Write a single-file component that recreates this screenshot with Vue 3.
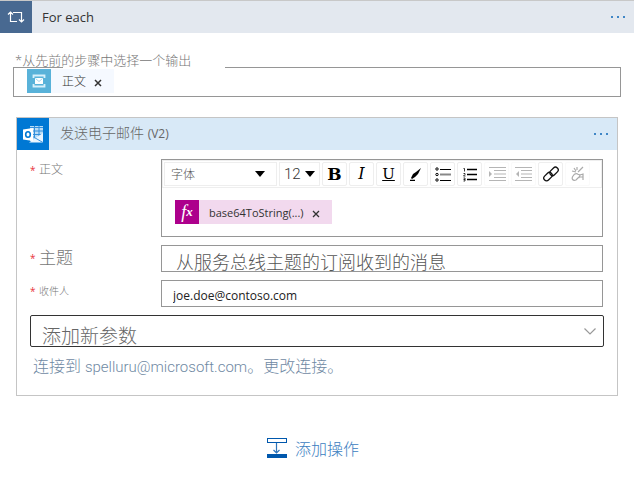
<script setup>
import { ref } from 'vue'

const subject = ref('从服务总线主题的订阅收到的消息')
const recipient = ref('joe.doe@contoso.com')
const dots = [0, 6, 12]
</script>

<template>
  <main class="loop">
    <header class="bar loop-bar">
      <span class="bar-icon loop-icon">
        <svg width="18" height="14" viewBox="0 0 18 14" fill="none" stroke="#fff" stroke-width="1.2">
          <path d="M10 11.500H3.500V2M1 4.500 3.500 2 6 4.500M6 2.500h8.500V12M12 9.500l2.500 2.500L17 9.500" />
        </svg>
      </span>
      <h1 class="loop-title">For each</h1>
      <button class="more" aria-label="更多">
        <svg width="14" height="2" viewBox="0 0 14 2" fill="#3f86c6">
          <rect v-for="d in dots" :key="d" :x="d" y="0" width="2" height="2" />
        </svg>
      </button>
    </header>

    <section class="source">
      <label class="source-label" for="source-box">*从先前的步骤中选择一个输出</label>
      <div id="source-box" class="source-box" tabindex="0">
        <span class="token token-bus">
          <span class="token-icon">
            <svg width="14" height="14" viewBox="0 0 14 14">
              <path d="M1.500 4V1.500h11V4M1.500 10v2.500h11V10" fill="none" stroke="#d8f0fb" stroke-width="1.800" />
              <rect x="3" y="4" width="8" height="6" fill="#fff" />
              <path d="M3.500 4.500 7 7.500l3.500-3" fill="none" stroke="#a9d9ee" />
            </svg>
          </span>
          <span class="token-text">正文</span>
          <button class="remove" aria-label="删除">
            <svg width="8" height="8" viewBox="0 0 8 8" stroke="#333" stroke-width="1.5"><path d="m1 1 6 6M7 1 1 7" /></svg>
          </button>
        </span>
      </div>
    </section>

    <section class="card">
      <header class="bar card-bar">
        <span class="bar-icon mail-icon">
          <svg width="22" height="20" viewBox="0 0 22 20">
            <path d="M8 2h13v15H8z" fill="#b9dcf6" />
            <path d="M8 3.500h13M8 7h13M8 10.500h13M12.500 2v12M17 2v12" stroke="#338fdc" stroke-width="1" />
            <path d="M7 18.500 21 9v9.500z" fill="#e9f5ff" />
            <path d="m8 11 13 7.500" stroke="#3b94de" />
            <path d="M1 5.500 11 4v13L1 15.500z" fill="#fff" />
            <ellipse cx="6" cy="10.500" rx="2.300" ry="2.700" fill="none" stroke="#0078d4" stroke-width="1.600" />
          </svg>
        </span>
        <h2 class="card-title">发送电子邮件 <small>(V2)</small></h2>
        <button class="more" aria-label="更多">
          <svg width="14" height="2" viewBox="0 0 14 2" fill="#3f86c6">
            <rect v-for="d in dots" :key="d" :x="d" y="0" width="2" height="2" />
          </svg>
        </button>
      </header>

      <form class="form" @submit.prevent>
        <div class="row">
          <label class="name" for="body"><i>*</i>正文</label>
          <div class="editor">
            <div class="tools">
              <span class="pick pick-font">
                <select aria-label="字体"><option>字体</option></select>
                <svg width="10" height="6" viewBox="0 0 10 6"><path d="M0 0h10L5 6z" /></svg>
              </span>
              <span class="pick pick-size">
                <select aria-label="字号"><option>12</option></select>
                <svg width="10" height="6" viewBox="0 0 10 6"><path d="M0 0h10L5 6z" /></svg>
              </span>
              <button class="tool bold" type="button">B</button>
              <button class="tool italic" type="button">I</button>
              <button class="tool underline" type="button">U</button>
              <button class="tool" type="button" aria-label="颜色">
                <svg width="14" height="14" viewBox="0 0 14 14">
                  <path d="m2 11 2-4 3-2 5-4-3 6-3 3-3 2z" />
                  <path d="M1 13.500h5" stroke="#000" stroke-width="1.500" />
                </svg>
              </button>
              <button class="tool" type="button" aria-label="项目符号">
                <svg width="16" height="15" viewBox="0 0 16 15" fill="none" stroke="#000">
                  <circle cx="2" cy="2" r="1.200" /><circle cx="2" cy="7.500" r="1.200" /><circle cx="2" cy="13" r="1.200" />
                  <path d="M5 2.500h11M5 13.500h11" />
                  <path d="M5 7.500h11" stroke="#888" stroke-width="2" />
                </svg>
              </button>
              <button class="tool" type="button" aria-label="编号">
                <svg width="14" height="15" viewBox="0 0 14 15" fill="none" stroke="#000">
                  <path d="M.5 1.500h1v3M.5 6.500h1.500v1L.5 9h2M.5 11h1.500v3H.5M.5 12.500H2" stroke-width=".8" />
                  <path d="M4 2.500h10M4 7.500h10M4 12.500h10" stroke-width="1.700" />
                </svg>
              </button>
              <button class="tool off" type="button" aria-label="增加缩进" disabled>
                <svg width="18" height="14" viewBox="0 0 18 14" fill="none" stroke="#b5b5b5">
                  <path d="M1 .5h17M1 13.500h17M6 3.500h12M6 10.500h12M6 7h12" stroke-width="1.200" />
                  <path d="m1 4 3 3-3 3z" fill="#b5b5b5" stroke="none" />
                </svg>
              </button>
              <button class="tool off" type="button" aria-label="减少缩进" disabled>
                <svg width="17" height="14" viewBox="0 0 17 14" fill="none" stroke="#b5b5b5">
                  <path d="M0 .5h17M0 13.500h17M6 3.500h11M6 10.500h11M6 7h11" stroke-width="1.200" />
                  <path d="M4 4 1 7l3 3z" fill="#b5b5b5" stroke="none" />
                </svg>
              </button>
              <button class="tool" type="button" aria-label="链接">
                <svg width="16" height="16" viewBox="0 0 16 16" fill="none" stroke="#111" stroke-width="1.300">
                  <rect x="6" y="2.500" width="9.500" height="5.500" rx="2.700" transform="rotate(-45 11 5)" />
                  <rect x=".5" y="8" width="9.500" height="5.500" rx="2.700" transform="rotate(-45 5 11)" />
                </svg>
              </button>
              <button class="tool off" type="button" aria-label="取消链接" disabled>
                <svg width="14" height="16" viewBox="0 0 14 16" fill="none" stroke="#aaa" stroke-width="1.200">
                  <path d="M12 1 7 6M3 2l2 3M1 5l4 1M6 1v3" />
                  <path d="M7 8c-2-1-4 0-5 2-2 3 0 5 3 4l3-3M6 8l3 1-1 3M9 9l3-1v6M12 11H9" />
                </svg>
              </button>
            </div>
            <div id="body" class="editor-body" tabindex="0">
              <span class="token token-fx">
                <span class="token-icon fx">f<sub>x</sub></span>
                <span class="token-text">base64ToString(...)</span>
                <button class="remove" type="button" aria-label="删除">
                  <svg width="8" height="8" viewBox="0 0 8 8" stroke="#333" stroke-width="1.300"><path d="m1 1 6 6M7 1 1 7" /></svg>
                </button>
              </span>
            </div>
          </div>
        </div>

        <div class="row">
          <label class="name name-large" for="subject"><i>*</i>主题</label>
          <input id="subject" v-model="subject" class="field field-large" type="text">
        </div>

        <div class="row">
          <label class="name name-small" for="to"><i>*</i>收件人</label>
          <input id="to" v-model="recipient" class="field" type="text">
        </div>

        <div class="params">
          <select aria-label="添加新参数"><option>添加新参数</option></select>
          <svg width="12" height="7" viewBox="0 0 12 7" fill="none" stroke="#999" stroke-width="1.200"><path d="m.5.5 5.500 5.500L11.500.5" /></svg>
        </div>

        <p class="connection">连接到 <span class="account">spelluru@microsoft.com</span>。<a href="#">更改连接。</a></p>
      </form>
    </section>

    <button class="add">
      <svg width="20" height="20" viewBox="0 0 20 20">
        <rect x=".5" y=".5" width="19" height="4" fill="#fff" stroke="#0058ad" />
        <path d="M9.500 5v10M6.500 12l3 3 3-3" fill="none" stroke="#2f75bb" stroke-width="1.200" />
        <rect y="16" width="20" height="4" fill="#0058ad" />
      </svg>
      添加操作
    </button>
  </main>
</template>

<style>
body {
  background: #fff;
}
</style>

<style scoped>
.loop {
  font-family: "Open Sans", "Noto Sans CJK SC", sans-serif;
  font-size: 12px;
  color: #333;
}
.loop * {
  box-sizing: border-box;
}
button,
input,
select {
  font: inherit;
  color: inherit;
  margin: 0;
  padding: 0;
  border: 0;
  background: none;
}
select {
  appearance: none;
}
svg {
  display: block;
  flex: none;
}
h1,
h2,
p {
  margin: 0;
  font-weight: 400;
}
.bar {
  display: flex;
  align-items: center;
  height: 32px;
}
.bar-icon {
  display: grid;
  place-items: center;
  width: 32px;
  height: 32px;
}
.loop-bar {
  height: 33px;
  border-top: 1px solid #c8c8c8;
  background: #e3e8ef;
}
.loop-icon {
  background: #486991;
}
.loop-title {
  margin-left: 10px;
  font-size: 13px;
}
.more {
  display: flex;
  margin-left: auto;
  padding: 8px 9px;
}
.source {
  padding: 18px 13px 0;
}
.source-label {
  display: block;
  position: relative;
  z-index: 1;
  height: 16px;
  padding-left: 2px;
  font-size: 13px;
  font-weight: 300;
  line-height: 18px;
  color: #777;
}
.source-box {
  position: relative;
  display: flex;
  height: 30px;
  padding: 1px 13px;
  border: 1px solid #969696;
}
.source-box::before {
  content: "";
  position: absolute;
  top: -1px;
  left: 49px;
  width: 162px;
  height: 1px;
  background: #fff;
}
.token {
  display: flex;
  align-items: center;
  height: 24px;
  padding-right: 12px;
}
.token-icon {
  display: grid;
  place-items: center;
  width: 24px;
  height: 24px;
  margin-right: 11px;
}
.token-bus {
  background: #f5f9ff;
  font-weight: 300;
}
.token-bus .token-icon {
  background: #59b2d9;
}
.remove {
  padding-top: 4px;
  margin-left: 8px;
}
.card {
  margin: 20px 16px 0;
  border: 1px solid #c5c5c5;
}
.card-bar {
  background: #d8e9f7;
}
.mail-icon {
  background: #0078d4;
}
.card-title {
  margin-left: 11px;
  font-size: 14px;
  font-weight: 300;
  line-height: 20px;
  padding-bottom: 2px;
  color: #666;
}
.card-title small {
  font-size: 12px;
  font-weight: 400;
}
.form {
  display: grid;
  gap: 8px;
  padding: 9px 13px 16px;
}
.row {
  display: grid;
  grid-template-columns: 131px 1fr;
  padding-right: 1px;
}
.name {
  display: flex;
  align-items: flex-start;
  font-weight: 300;
  line-height: 22px;
  color: #777;
}
.name i {
  width: 9px;
  font-size: 10px;
  font-style: normal;
  font-weight: 400;
  color: #e8323c;
}
.name-large {
  font-size: 17px;
  line-height: 26px;
}
.name-small {
  font-size: 10px;
}
.editor {
  height: 78px;
  border: 1px solid #969696;
}
.tools {
  display: flex;
  gap: 2px;
  height: 28px;
  padding: 1px;
  border: 1px solid #eee;
  overflow: hidden;
}
.tool {
  display: flex;
  align-items: center;
  justify-content: center;
  width: 25px;
  height: 24px;
  border: 1px solid #eee;
  border-radius: 2px;
  color: #000;
}
.off {
  border-color: #fafafa;
}
.bold {
  font: 700 17px/20px "DejaVu Serif", serif;
}
.italic {
  font: italic 16px/20px "DejaVu Serif", serif;
}
.underline {
  font: 15px/20px "DejaVu Serif", serif;
  text-decoration: underline;
}
.pick {
  display: grid;
  align-items: center;
  height: 24px;
  border: 1px solid #eee;
}
.pick select,
.pick svg {
  grid-area: 1 / 1;
}
.pick select {
  width: 100%;
  padding-left: 6px;
}
.pick svg {
  justify-self: end;
  margin-right: 11px;
  pointer-events: none;
}
.pick-font {
  width: 113px;
  font-weight: 300;
  color: #555;
}
.pick-size {
  width: 41px;
  font-family: Roboto, sans-serif;
  font-size: 15px;
  font-weight: 300;
  color: #333;
}
.pick-size select {
  padding-left: 4px;
}
.pick-size svg {
  margin-right: 4px;
}
.editor-body {
  display: flex;
  padding: 12px 13px;
}
.token-fx {
  background: #f2d9ee;
}
.token-fx .token-icon {
  margin-right: 10px;
  background: #ad008c;
}
.token-fx .token-text {
  font-size: 11px;
}
.token-fx .fx {
  display: flex;
  justify-content: center;
  font: italic 18px/20px "Liberation Serif", serif;
  color: #fff;
}
.fx sub {
  font-size: 13px;
  font-weight: 700;
  line-height: 26px;
}
.field {
  width: 100%;
  min-width: 0;
  height: 27px;
  padding: 3px 11px 0;
  border: 1px solid #969696;
  color: #222;
}
.field-large {
  padding: 5px 14px 0;
  font-size: 18px;
  font-weight: 300;
  line-height: 20px;
  color: #555;
}
.params {
  display: grid;
  align-items: center;
  height: 32px;
  border: 1px solid #333;
  border-radius: 2px;
}
.params select,
.params svg {
  grid-area: 1 / 1;
}
.params select {
  width: 100%;
  height: 30px;
  padding: 9px 11px 0;
  font-size: 19px;
  font-weight: 300;
  line-height: 20px;
  color: #666;
}
.params svg {
  justify-self: end;
  margin-right: 7px;
  pointer-events: none;
}
.connection {
  padding-left: 3px;
  font-family: Roboto, "Noto Sans CJK SC", sans-serif;
  font-size: 16px;
  font-weight: 300;
  line-height: 24px;
  color: #6f89a3;
}
.account {
  font-size: 15px;
}
.connection a {
  color: inherit;
  text-decoration: none;
}
.add {
  display: flex;
  align-items: center;
  gap: 8px;
  margin: 40px auto 0;
  padding-right: 8px;
  font-size: 16px;
  font-weight: 300;
  color: #3c80bf;
}
</style>
